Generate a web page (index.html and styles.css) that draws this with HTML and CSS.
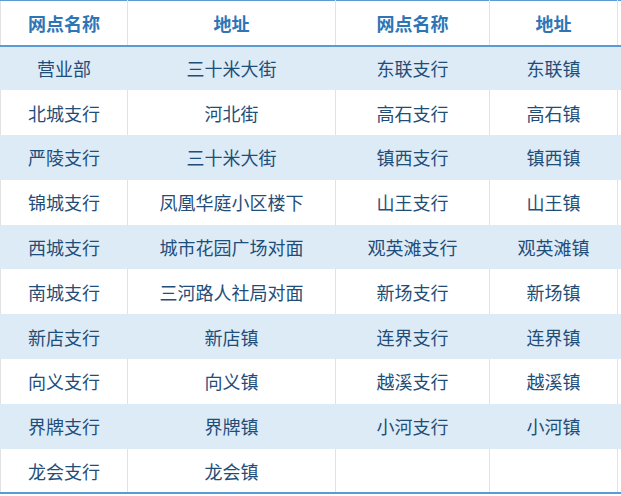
FILE: index.html
```html
<!DOCTYPE html>
<html lang="zh-CN">
<head>
<meta charset="utf-8">
<title>网点</title>
<link rel="stylesheet" href="styles.css">
</head>
<body>
<table class="branches">
  <colgroup>
    <col class="c1"><col class="c2"><col class="c3"><col class="c4"><col class="c5">
  </colgroup>
  <thead>
    <tr><th>网点名称</th><th>地址</th><th>网点名称</th><th>地址</th><th class="pad"></th></tr>
  </thead>
  <tbody>
    <tr class="alt"><td>营业部</td><td>三十米大街</td><td>东联支行</td><td>东联镇</td><td class="pad"></td></tr>
    <tr><td>北城支行</td><td>河北街</td><td>高石支行</td><td>高石镇</td><td class="pad"></td></tr>
    <tr class="alt"><td>严陵支行</td><td>三十米大街</td><td>镇西支行</td><td>镇西镇</td><td class="pad"></td></tr>
    <tr><td>锦城支行</td><td>凤凰华庭小区楼下</td><td>山王支行</td><td>山王镇</td><td class="pad"></td></tr>
    <tr class="alt"><td>西城支行</td><td>城市花园广场对面</td><td>观英滩支行</td><td>观英滩镇</td><td class="pad"></td></tr>
    <tr><td>南城支行</td><td>三河路人社局对面</td><td>新场支行</td><td>新场镇</td><td class="pad"></td></tr>
    <tr class="alt"><td>新店支行</td><td>新店镇</td><td>连界支行</td><td>连界镇</td><td class="pad"></td></tr>
    <tr><td>向义支行</td><td>向义镇</td><td>越溪支行</td><td>越溪镇</td><td class="pad"></td></tr>
    <tr class="alt"><td>界牌支行</td><td>界牌镇</td><td>小河支行</td><td>小河镇</td><td class="pad"></td></tr>
    <tr class="last"><td>龙会支行</td><td>龙会镇</td><td></td><td></td><td class="pad"></td></tr>
  </tbody>
</table>
</body>
</html>
```

FILE: styles.css
```css
html, body {
  margin: 0;
  padding: 0;
  background: #ffffff;
}

.branches {
  border-collapse: collapse;
  table-layout: fixed;
  width: 621px;
  font-family: "Noto Sans CJK SC", "Noto Sans", sans-serif;
  font-size: 18px;
}

.c1 { width: 127px; }
.c2 { width: 208px; }
.c3 { width: 154px; }
.c4 { width: 128px; }
.c5 { width: 4px; }

.branches th,
.branches td {
  padding: 0;
  text-align: center;
  vertical-align: middle;
  border-left: 1px solid #e2e2e2;
  border-right: 1px solid #e2e2e2;
  white-space: nowrap;
  overflow: hidden;
  line-height: 20px;
}

.branches thead tr {
  height: 45px;
}

.branches th {
  color: #2e75b6;
  font-weight: bold;
  border-top: 1px solid #5b9bd5;
  border-bottom: 2px solid #5b9bd5;
}

.branches tbody tr {
  height: 44.8px;
}

.branches td {
  color: #1f4e79;
}

.branches tr.alt td {
  background: #ddebf7;
  border-left-color: #ddebf7;
  border-right-color: #ddebf7;
}

.branches tr.last td {
  border-bottom: 2px solid #5b9bd5;
}

.branches .pad {
  border-right: none;
}
```
